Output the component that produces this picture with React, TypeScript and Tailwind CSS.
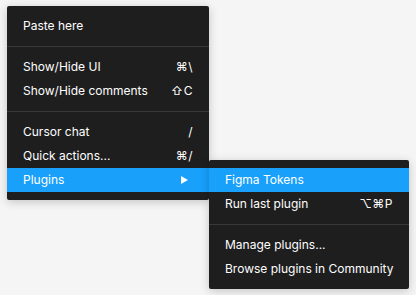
type Item = { label: string; shortcut?: string; active?: boolean; arrow?: boolean } | "sep";

const mainItems: Item[] = [
  { label: "Paste here" },
  "sep",
  { label: "Show/Hide UI", shortcut: "⌘\\" },
  { label: "Show/Hide comments", shortcut: "⇧C" },
  "sep",
  { label: "Cursor chat", shortcut: "/" },
  { label: "Quick actions...", shortcut: "⌘/" },
  { label: "Plugins", active: true, arrow: true },
];

const pluginItems: Item[] = [
  { label: "Figma Tokens", active: true },
  { label: "Run last plugin", shortcut: "⌥⌘P" },
  "sep",
  { label: "Manage plugins..." },
  { label: "Browse plugins in Community" },
];

const Separator = () => (
  <div className="flex h-[17px] items-center">
    <div className="h-px w-full bg-[#383838]" />
  </div>
);

const Row = ({ item, children }: { item: Exclude<Item, "sep">; children?: React.ReactNode }) => (
  <div
    className={`relative flex h-6 items-center justify-between whitespace-nowrap pl-4 pr-4 ${item.active ? "bg-[#18a0fb]" : ""}`}
  >
    <span>{item.label}</span>
    {item.shortcut && <span className="tracking-[0.5px]">{item.shortcut}</span>}
    {item.arrow && (
      <svg width="7" height="8" viewBox="0 0 7 8" className="mr-[5px]">
        <path d="M0 0 L7 4 L0 8 Z" fill="white" />
      </svg>
    )}
    {children}
  </div>
);

const Menu = ({ items, width, sub }: { items: Item[]; width: string; sub?: React.ReactNode }) => (
  <div className={`${width} rounded-[2px] bg-[#1e1e1e] py-2 shadow-[0_2px_10px_rgba(0,0,0,0.2)]`}>
    {items.map((item, i) =>
      item === "sep" ? (
        <Separator key={i} />
      ) : (
        <Row key={i} item={item}>
          {item.arrow && sub}
        </Row>
      )
    )}
  </div>
);

export default function App() {
  return (
    <div
      className="h-[295px] w-[416px] bg-[#f5f5f5] pl-[7px] pt-[6px] text-[12px] text-white antialiased"
      style={{ fontFamily: "Inter, 'Noto Sans', sans-serif" }}
    >
      <Menu
        items={mainItems}
        width="w-[202px]"
        sub={
          <div className="absolute left-full top-[-8px]">
            <Menu items={pluginItems} width="w-[200px]" />
          </div>
        }
      />
    </div>
  );
}
